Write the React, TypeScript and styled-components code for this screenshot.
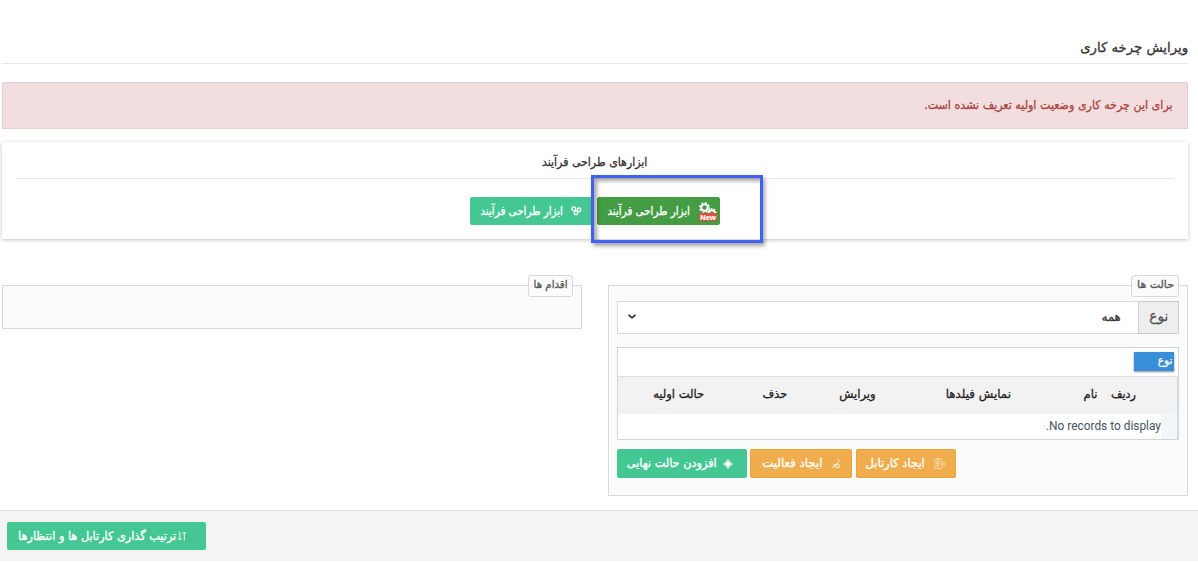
import React from "react";
import styled, { createGlobalStyle } from "styled-components";

const Global = createGlobalStyle`
  *{box-sizing:border-box}
  html,body{margin:0;background:#fff}
  body{font-family:"DejaVu Sans","Liberation Sans",sans-serif;font-size:12px;color:#333;direction:rtl}
`;
const Page = styled.div`height:563px;overflow:hidden;display:flex;flex-direction:column;`;
const Content = styled.main`height:510px;padding:29px 10px 0 2px;flex:none;`;
const Title = styled.h1`margin:0;height:35px;line-height:36px;border-bottom:1px solid #e8e8e8;font-size:13.5px;font-weight:400;`;
const Alert = styled.div`margin-top:18px;height:47px;line-height:45px;padding:0 14px;border:1px solid #ebccd1;background:#f2dede;color:#a94442;font-size:12px;`;
const Tools = styled.section`margin-top:13px;height:97px;padding:0 14px;background:#fff;box-shadow:0 1px 4px rgba(0,0,0,.24);`;
const ToolsTitle = styled.h2`margin:0;height:37px;line-height:40px;text-align:center;font-size:12px;font-weight:400;border-bottom:1px solid #e8e8e8;`;
const ToolRow = styled.div`display:flex;justify-content:center;gap:4px;padding-top:18px;`;
const ToolSlot = styled.div`position:relative;`;
const Highlight = styled.div`position:absolute;left:-6px;top:-22px;width:172px;height:68px;border:3px solid #4360f5;box-shadow:2px 3px 4px rgba(0,0,0,.35),inset 3px 3px 4px rgba(0,0,0,.35);`;
const tones = { mint: ["#45c794", "#45c794"], green: ["#449d44", "#449d44"], amber: ["#f0ad4e", "#eea236"] };
const Button = styled.button<{ $tone: keyof typeof tones; $w: number; $h?: number; $gap?: number; $pr?: number }>`
  display:flex;align-items:center;gap:${p => p.$gap ?? 7}px;width:${p => p.$w}px;height:${p => p.$h ?? 28}px;
  padding:0 ${p => p.$pr ?? 10}px 0 0;border:1px solid ${p => tones[p.$tone][1]};border-radius:2px;background:${p => tones[p.$tone][0]};
  color:#fff;font:12px "DejaVu Sans",sans-serif;white-space:nowrap;direction:rtl;
  svg{flex:none;}
`;
const Columns = styled.div`display:flex;justify-content:space-between;align-items:flex-start;margin-top:46px;`;
const Group = styled.section<{ $h: number }>`position:relative;width:580px;height:${p => p.$h}px;border:1px solid #dadada;background:#fbfbfb;padding:15px 8px 0;`;
const Legend = styled.div<{ $w: number }>`position:absolute;top:-11px;right:8px;width:${p => p.$w}px;height:22px;line-height:18px;padding-right:4px;border:1px solid #d8d8d8;border-radius:3px;background:#fbfbfb;color:#555;font-size:11px;white-space:nowrap;`;
const Field = styled.div`display:flex;height:33px;`;
const Addon = styled.div`width:41px;border:1px solid #ccc;background:#eee;color:#555;text-align:center;line-height:29px;font-size:14px;`;
const Select = styled.div`flex:1;display:flex;justify-content:space-between;align-items:center;border:1px solid #dadada;border-right:0;background:#fff;padding:0 17px 2px 10px;font-size:12px;`;
const Grid = styled.div`margin-top:13px;height:93px;border:1px solid #cdd6dd;background:#fff;`;
const GroupBar = styled.div`height:28px;padding:4px 4px 0;`;
const Tag = styled.div`width:40px;height:19px;line-height:17px;padding-right:2px;background:#398ed9;color:#fff;font-size:11px;box-shadow:0 1px 2px rgba(0,0,0,.45);`;
const Head = styled.div`height:38px;display:grid;grid-template-columns:68px 97px 134px 88px 84px 1fr;border-top:1px solid #dde0e2;border-right:1px solid #d5dfe5;background:#f2f2f2;`;
const Th = styled.div<{ $right?: number }>`padding-right:${p => p.$right ?? 0}px;line-height:35px;color:#222;font-size:12px;white-space:nowrap;`;
const Empty = styled.div`display:flex;height:25px;font:11.9px/24px Roboto,sans-serif;color:#455560;`;
const Indent = styled.div`width:17px;background:#f2f6f8;border-right:1px solid #d5dfe5;`;
const Actions = styled.div`display:flex;justify-content:flex-end;gap:3px;padding-top:9px;button:first-child{margin-left:1px;}`;
const Footer = styled.footer`height:51px;flex:none;border-top:1px solid #e1e1e1;background:#f4f4f4;padding:11px 0 0 7px;display:flex;justify-content:flex-end;`;
/* Persian labels are slightly condensed; $x is the horizontal scale. */
const Text = styled.span<{ $x?: number; $center?: boolean }>`
  display:inline-block;white-space:nowrap;transform:scaleX(${p => p.$x ?? 1});transform-origin:${p => p.$center ? "center" : "right"};
  -webkit-text-stroke:.3px currentColor;
  button > &{padding-bottom:1px;}
`;

const NewGears = () => (
  <svg width="18" height="19" viewBox="0 0 18 19">
    <circle cx="5.5" cy="5.5" r="3.3" fill="none" stroke="#fff" strokeWidth="2" />
    <circle cx="5.5" cy="5.5" r="4.8" fill="none" stroke="#fff" strokeWidth="1.4" strokeDasharray="1.9 1.87" />
    <path d="M9.8 12c0-5 6-5 6.3 0" fill="none" stroke="#fff" strokeWidth="2" />
    <path d="M12.8 6v2M9.6 7.5l1 1.3M16 7l-1 1.5M17.5 10l-2 .5" stroke="#fff" strokeWidth="1.4" />
    <rect y="11" width="18" height="8" rx="1" fill="#e84b3c" />
    <text x="9" y="17.7" textAnchor="middle" fill="#fff" stroke="#fff" strokeWidth=".2" fontFamily="Liberation Sans,sans-serif" fontWeight="700" fontSize="7.6">New</text>
  </svg>
);
const Circles = () => (
  <svg width="11" height="10" viewBox="0 0 11 10" fill="none" stroke="#fff" strokeWidth="1.3">
    <circle cx="2.8" cy="2.8" r="1.9" /><circle cx="8" cy="3.8" r="1.8" /><circle cx="5" cy="7" r="1.8" />
  </svg>
);
const Clipboard = () => (
  <svg width="12" height="11" viewBox="0 0 12 11" fill="none" stroke="#fbe3bd" strokeWidth=".7">
    <path d="M7.5 3V1.3H.7v9.2h6.8V9M2.5 1.3V.5h3v.8M2 3.5h4M2 5.5h3M2 7.5h3M3.5 3v6" /><path d="M5.5 6c1.5-3 4.5-3 6 0-1.5 3-4.5 3-6 0z" /><circle cx="8.5" cy="6" r=".9" />
  </svg>
);
const Activity = () => (
  <svg width="9" height="11" viewBox="0 0 9 11" fill="none" stroke="#fff" strokeWidth=".9">
    <path d="M.5 9.8L7 3.6M1 7l2-.2M5 1.4h1M7.5 1.7v1" /><circle cx="5.6" cy="8" r="1.8" />
  </svg>
);
const Diamond = () => (
  <svg width="10" height="10" viewBox="0 0 10 10">
    <path d="M5 0l5 5-5 5-5-5z" fill="#a4e3ca" /><circle cx="5" cy="5" r="2.4" fill="#fff" />
    <path d="M5 0v10M0 5h10" stroke="#fff" strokeWidth=".6" />
  </svg>
);
const Sort = () => (
  <svg width="10" height="10" viewBox="0 0 10 10" fill="none" stroke="#fff" strokeWidth=".9">
    <path d="M7.3 9.5V1M5.3 3l2-2 2 2M2.8.5V9M.8 7l2 2 2-2" />
  </svg>
);
const Chevron = () => (
  <svg width="8" height="5" viewBox="0 0 8 5"><path d="M.5.8L4 3.8 7.5.8" fill="none" stroke="#222" strokeWidth="1.6" /></svg>
);

const columns = [
  { label: "ردیف", right: 41, x: 0.93 },
  { label: "نام", right: 12, x: 0.96 },
  { label: "نمایش فیلدها", right: 1, x: 0.99 },
  { label: "ویرایش", right: 2, x: 0.97 },
  { label: "حذف", right: 3, x: 0.94 },
  { label: "حالت اولیه", right: 2, x: 0.96 },
];

export default function App() {
  return (
    <Page>
      <Global />
      <Content>
        <Title><Text $x={0.98}>ویرایش چرخه کاری</Text></Title>
        <Alert><Text $x={0.925}>برای این چرخه کاری وضعیت اولیه تعریف نشده است.</Text></Alert>
        <Tools>
          <ToolsTitle><Text $x={0.915} $center>ابزارهای طراحی فرآیند</Text></ToolsTitle>
          <ToolRow>
            <ToolSlot>
              <Button $tone="green" $w={123} $pr={2} $gap={9}><NewGears /><Text $x={0.86}>ابزار طراحی فرآیند</Text></Button>
              <Highlight />
            </ToolSlot>
            <Button $tone="mint" $w={123} $gap={8}><Circles /><Text $x={0.86}>ابزار طراحی فرآیند</Text></Button>
          </ToolRow>
        </Tools>
        <Columns>
          <Group $h={211}>
            <Legend $w={48}><Text>حالت ها</Text></Legend>
            <Field><Addon><Text $x={0.97} $center>نوع</Text></Addon><Select><Text $x={0.96}>همه</Text><Chevron /></Select></Field>
            <Grid>
              <GroupBar><Tag><Text $x={0.95}>نوع</Text></Tag></GroupBar>
              <Head>
                {columns.map(c => <Th key={c.label} $right={c.right}><Text $x={c.x}>{c.label}</Text></Th>)}
              </Head>
              <Empty><Indent />No records to display.</Empty>
            </Grid>
            <Actions>
              <Button $tone="amber" $w={100} $h={29} $pr={9} $gap={9}><Clipboard /><Text $x={0.96}>ایجاد کارتابل</Text></Button>
              <Button $tone="amber" $w={102} $h={29} $gap={10}><Activity /><Text $x={0.98}>ایجاد فعالیت</Text></Button>
              <Button $tone="mint" $w={130} $h={29} $pr={13} $gap={6}><Diamond /><Text $x={0.94}>افزودن حالت نهایی</Text></Button>
            </Actions>
          </Group>
          <Group $h={44}><Legend $w={45}><Text $x={0.93}>اقدام ها</Text></Legend></Group>
        </Columns>
      </Content>
      <Footer><Button $tone="mint" $w={199} $pr={18} $gap={1}><Sort /><Text $x={0.94}>ترتیب گذاری کارتابل ها و انتظارها</Text></Button></Footer>
    </Page>
  );
}
